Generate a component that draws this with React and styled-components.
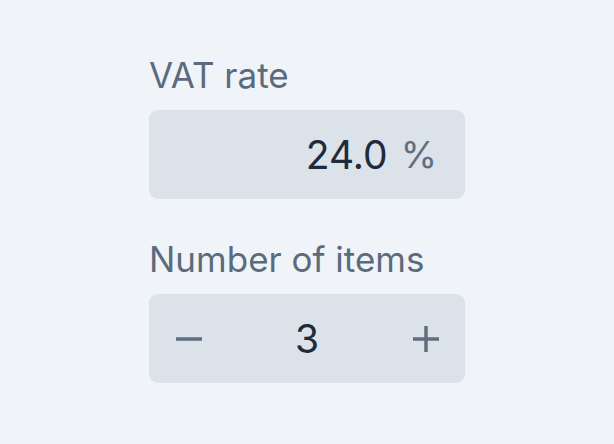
import styled, { createGlobalStyle } from 'styled-components';

const GlobalStyle = createGlobalStyle`
  html, body {
    margin: 0;
    background: #f0f4f8;
    font-family: Inter, "Noto Sans", sans-serif;
  }
`;

export default function App() {
  return (
    <>
      <GlobalStyle />
      <Page>
        <Form>
          <Field>
            <Label>VAT rate</Label>
            <Box align='end'>
              <Value>24.0</Value>
              <Unit>%</Unit>
            </Box>
          </Field>
          <Field>
            <Label>Number of items</Label>
            <Box align='between'>
              <StepButton aria-label='Decrease'>
                <svg width='28' height='28' viewBox='0 0 28 28'>
                  <line x1='1' y1='14' x2='27' y2='14' stroke='currentColor' strokeWidth='3.5' />
                </svg>
              </StepButton>
              <Value>3</Value>
              <StepButton aria-label='Increase'>
                <svg width='28' height='28' viewBox='0 0 28 28'>
                  <line x1='1' y1='14' x2='27' y2='14' stroke='currentColor' strokeWidth='3.5' />
                  <line x1='14' y1='1' x2='14' y2='27' stroke='currentColor' strokeWidth='3.5' />
                </svg>
              </StepButton>
            </Box>
          </Field>
        </Form>
      </Page>
    </>
  );
}

const Page = styled.div`
  width: 614px;
  height: 444px;
  display: flex;
  justify-content: center;
  padding-top: 55px;
  box-sizing: border-box;
`;

const Form = styled.div`
  width: 316px;
  display: flex;
  flex-direction: column;
  gap: 40px;
`;

const Field = styled.div`
  display: flex;
  flex-direction: column;
  gap: 14px;
`;

const Label = styled.div`
  font-size: 35px;
  color: #5b6b7e;
  line-height: 41px;
`;

const Box = styled.div`
  height: 89px;
  border-radius: 9px;
  background: #dce2e9;
  display: flex;
  align-items: center;
  justify-content: ${({ align }) => (align === 'end' ? 'flex-end' : 'space-between')};
  gap: 13px;
  padding: ${({ align }) => (align === 'end' ? '0 28px 0 0' : '0')};
  box-sizing: border-box;
`;

const Value = styled.span`
  font-size: 39px;
  color: #1f2a3c;
`;

const Unit = styled.span`
  font-size: 37px;
  color: #5f6e80;
`;

const StepButton = styled.button`
  width: 79px;
  height: 89px;
  border: none;
  background: none;
  padding: 0;
  color: #5f6e80;
  display: flex;
  align-items: center;
  justify-content: center;
  cursor: pointer;
`;
